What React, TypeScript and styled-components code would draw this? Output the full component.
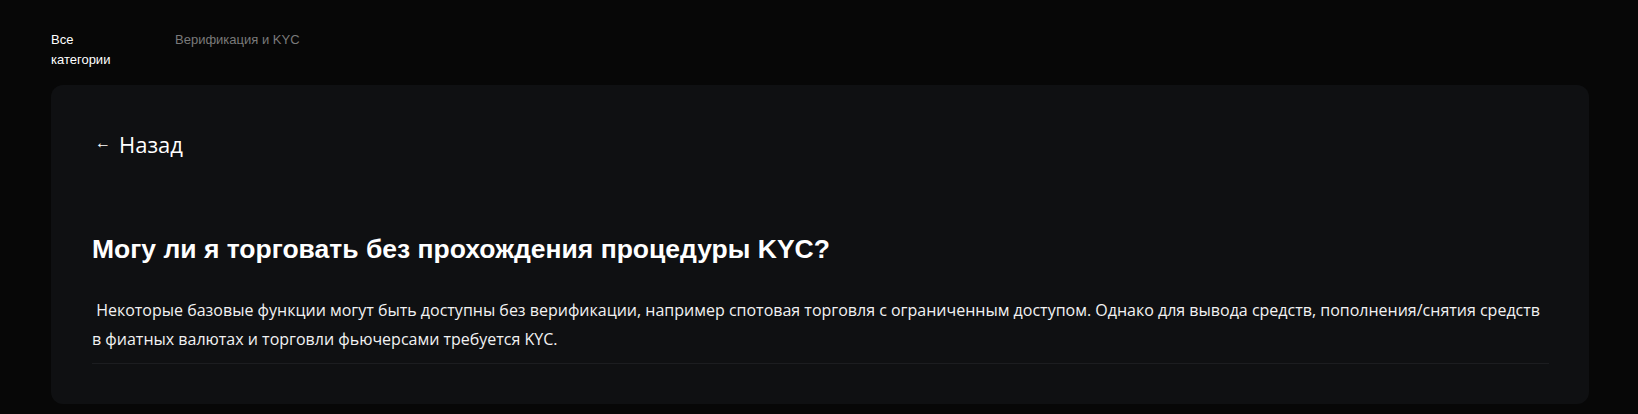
import React from "react";
import styled, { createGlobalStyle } from "styled-components";

const GlobalStyle = createGlobalStyle`
  html, body {
    margin: 0;
    padding: 0;
    background: #070707;
  }
  body {
    font-family: "Liberation Sans", Arial, sans-serif;
    color: #ffffff;
  }
`;

const Page = styled.div`
  padding: 30px 49px 0 51px;
`;

const Crumbs = styled.nav`
  display: flex;
  align-items: flex-start;
  font-family: "Liberation Sans", Arial, sans-serif;
  font-size: 13px;
  line-height: 19.5px;
`;

const Crumb = styled.a<{ $active?: boolean }>`
  display: block;
  width: ${({ $active }) => ($active ? "64px" : "auto")};
  margin-right: ${({ $active }) => ($active ? "60px" : "0")};
  color: ${({ $active }) => ($active ? "#ffffff" : "#7a7a7a")};
  text-decoration: none;
  cursor: pointer;
`;

const Card = styled.section`
  margin-top: 16px;
  background: #0f1012;
  border-radius: 12px;
  padding: 43px 40px 40px 41px;
`;

const BackLink = styled.a`
  display: inline-flex;
  align-items: center;
  gap: 8px;
  margin-left: 3px;
  color: #ffffff;
  text-decoration: none;
  font-family: "Open Sans", "Noto Sans", sans-serif;
  font-size: 22px;
  line-height: 32px;
  cursor: pointer;
`;

const Arrow = styled.span`
  font-size: 16px;
  line-height: 1;
  margin-top: -4px;
`;

const Question = styled.h1`
  margin: 73px 0 0;
  font-family: "Liberation Sans", Arial, sans-serif;
  font-weight: 700;
  font-size: 26.5px;
  line-height: 32px;
  color: #ffffff;
`;

const Answer = styled.div`
  margin-top: 31px;
  padding-bottom: 9px;
  border-bottom: 1px solid #1c1d20;
`;

const AnswerText = styled.p`
  margin: 0;
  font-family: "Open Sans", "Noto Sans", sans-serif;
  font-size: 16px;
  line-height: 29px;
  color: #f2f2f2;
`;

export default function App() {
  return (
    <>
      <GlobalStyle />
      <Page>
        <Crumbs>
          <Crumb $active>Все категории</Crumb>
          <Crumb>Верификация и KYC</Crumb>
        </Crumbs>
        <Card>
          <BackLink>
            <Arrow>←</Arrow>
            Назад
          </BackLink>
          <Question>Могу ли я торговать без прохождения процедуры KYC?</Question>
          <Answer>
            <AnswerText>
              {"\u00a0"}Некоторые базовые функции могут быть доступны без верификации, например
              спотовая торговля с ограниченным доступом. Однако для вывода средств,
              пополнения/снятия средств в фиатных валютах и торговли фьючерсами требуется KYC.
            </AnswerText>
          </Answer>
        </Card>
      </Page>
    </>
  );
}
